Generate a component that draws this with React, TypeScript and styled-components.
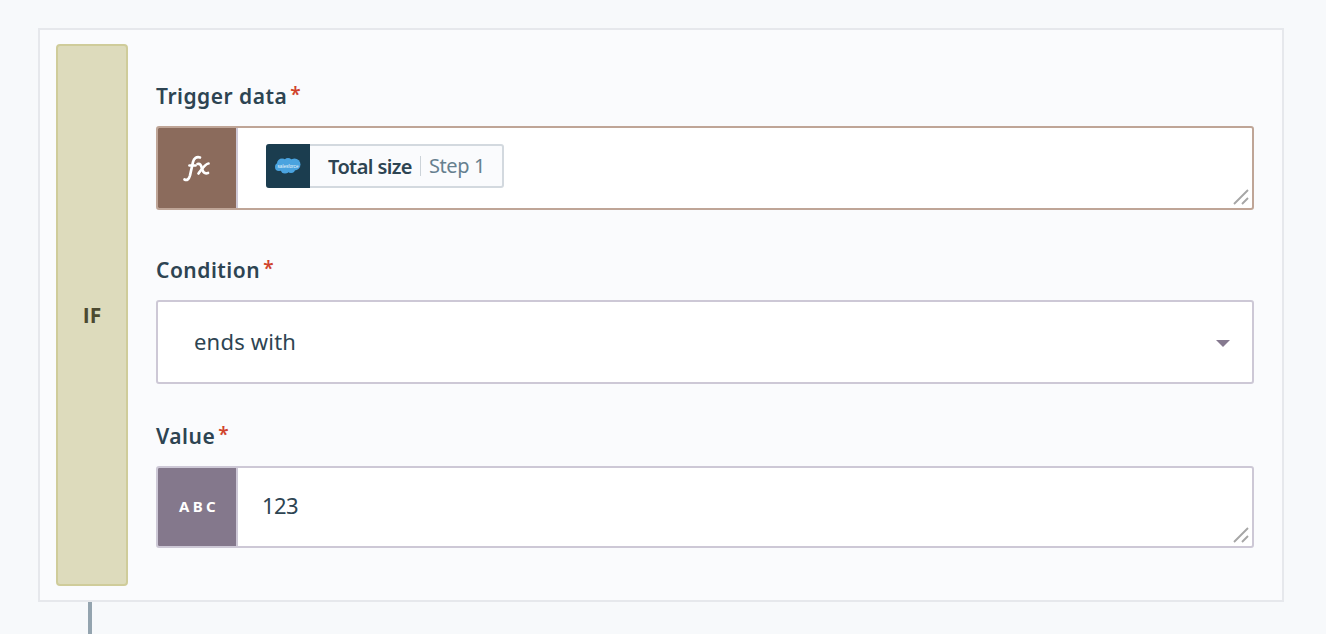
import React from "react";
import styled, { createGlobalStyle } from "styled-components";

const Global = createGlobalStyle`
  html, body { margin: 0; padding: 0; background: #f7f9fb; }
  body { font-family: "Noto Sans", "Open Sans", sans-serif; color: #2d4452; overflow: hidden; }
`;

const Page = styled.div`
  width: 1326px;
  height: 634px;
  box-sizing: border-box;
  padding: 28px 42px 0 38px;
  background: #f7f9fb;
  overflow: hidden;
`;

const Panel = styled.section`
  box-sizing: border-box;
  height: 574px;
  border: 2px solid #e6e8ec;
  background: #fafbfd;
  padding: 14px 28px 14px 16px;
  display: flex;
  gap: 28px;
`;

const Connector = styled.div`
  width: 4px;
  height: 32px;
  margin-left: 50px;
  background: #94a4af;
`;

const Branch = styled.div`
  box-sizing: border-box;
  width: 72px;
  flex: none;
  border: 2px solid #cfcc9a;
  border-radius: 4px;
  background: #dddbbc;
  display: flex;
  align-items: center;
  justify-content: center;
  font-family: "Open Sans", sans-serif;
  font-size: 21px;
  font-weight: 700;
  color: #4c4a30;
`;

const Fields = styled.div`
  flex: 1;
  min-width: 0;
  display: flex;
  flex-direction: column;
`;

const Label = styled.label<{ $top: number }>`
  display: flex;
  align-items: flex-start;
  height: 24px;
  margin-top: ${(p) => p.$top}px;
  margin-bottom: 18px;
  font-size: 21px;
  line-height: 24px;
  font-weight: 600;
  letter-spacing: 0.5px;
  color: #2d4452;
`;

const Star = styled.span`
  margin-left: 3px;
  color: #d0432c;
  font-size: 19px;
  line-height: 20px;
`;

const Control = styled.div<{ $h: number; $border: string }>`
  position: relative;
  box-sizing: border-box;
  height: ${(p) => p.$h}px;
  border: 2px solid ${(p) => p.$border};
  border-radius: 3px;
  background: #fff;
  display: flex;
  overflow: hidden;
`;

const TypeBox = styled.div<{ $bg: string }>`
  width: 78px;
  flex: none;
  border-right: 2px solid #cdc8d6;
  background: ${(p) => p.$bg};
  display: flex;
  align-items: center;
  justify-content: center;
  color: #fff;
`;

const Abc = styled.span`
  font-size: 15px;
  font-weight: 700;
  letter-spacing: 3.4px;
  margin-left: 4px;
  margin-bottom: 3px;
`;

const Content = styled.div<{ $pad: number; $ls: number; $lift: number }>`
  flex: 1;
  display: flex;
  align-items: center;
  padding-left: ${(p) => p.$pad}px;
  padding-bottom: ${(p) => p.$lift}px;
  font-size: 22px;
  letter-spacing: ${(p) => p.$ls}px;
  color: #2d4452;
`;

const Pill = styled.div`
  box-sizing: border-box;
  height: 44px;
  display: flex;
  align-items: center;
  border: 2px solid #d3d9df;
  border-left: none;
  border-radius: 3px;
  background: #fafbfd;
  margin-top: -4px;
`;

const PillLogo = styled.div`
  width: 44px;
  height: 44px;
  flex: none;
  border-radius: 3px 0 0 3px;
  background: #1b3d4f;
  margin: -2px 0;
  display: flex;
  align-items: center;
  justify-content: center;
`;

const PillName = styled.span`
  margin-left: 18px;
  font-size: 20px;
  font-weight: 600;
  letter-spacing: -0.6px;
  color: #2d4452;
`;

const PillStep = styled.span`
  margin-left: 8px;
  padding-left: 8px;
  border-left: 1px solid #ccd3d9;
  height: 20px;
  line-height: 20px;
  font-size: 20px;
  letter-spacing: -0.4px;
  color: #66808f;
  margin-right: 17px;
`;

const Caret = styled.div`
  position: absolute;
  right: 22px;
  top: 38px;
  width: 0;
  height: 0;
  border-left: 7px solid transparent;
  border-right: 7px solid transparent;
  border-top: 7px solid #85798f;
`;

const Grip = styled.svg`
  position: absolute;
  right: 3px;
  bottom: 3px;
`;

const LogoWord = styled.text`
  font-family: "Liberation Sans", sans-serif;
  font-size: 4.6px;
  fill: #e8f4fb;
`;

const ResizeGrip = () => (
  <Grip width="16" height="16" viewBox="0 0 16 16">
    <path d="M1 15 L15 1 M9 15 L15 9" stroke="#a6a6a6" strokeWidth="1.9" fill="none" />
  </Grip>
);

const FxIcon = () => (
  <svg width="30" height="28" viewBox="0 0 30 28">
    <g fill="none" stroke="#fff" strokeWidth="2.7" strokeLinecap="round">
      <path d="M2.500 25.500c2.500 1.200 4.500-.3 5.500-4L11 8c1-4 3.500-5.500 7-4.500" />
      <path d="M7.500 11.500h6" />
      <path d="M15.500 10c2.500-.6 3.600.7 4.500 4.500.9 3.800 2.300 5.500 6 4.500" />
      <path d="M26.500 9.500c-3 .2-6 4.500-10 10" />
    </g>
  </svg>
);

const CloudLogo = () => (
  <svg width="28" height="20" viewBox="0 0 28 20">
    <g fill="#4aa3df">
      <circle cx="8" cy="7.500" r="5" />
      <circle cx="14" cy="6.500" r="4.500" />
      <circle cx="20.500" cy="8.500" r="6" />
      <circle cx="5" cy="11" r="4" />
      <circle cx="11" cy="13" r="4.500" />
      <circle cx="17" cy="13" r="4" />
    </g>
    <LogoWord x="14" y="11.500" textAnchor="middle">salesforce</LogoWord>
  </svg>
);

export default function App() {
  return (
    <Page>
      <Global />
      <Panel>
        <Branch>IF</Branch>
        <Fields>
          <Label $top={40}>
            Trigger data<Star>*</Star>
          </Label>
          <Control $h={84} $border="#bfa597">
            <TypeBox $bg="#8b6b5c">
              <FxIcon />
            </TypeBox>
            <Content $pad={28} $ls={0} $lift={0}>
              <Pill>
                <PillLogo>
                  <CloudLogo />
                </PillLogo>
                <PillName>Total size</PillName>
                <PillStep>Step 1</PillStep>
              </Pill>
            </Content>
            <ResizeGrip />
          </Control>
          <Label $top={48}>
            Condition<Star>*</Star>
          </Label>
          <Control $h={84} $border="#cdc8d6">
            <Content $pad={36} $ls={0.2} $lift={2}>ends with</Content>
            <Caret />
          </Control>
          <Label $top={40}>
            Value<Star>*</Star>
          </Label>
          <Control $h={82} $border="#cdc8d6">
            <TypeBox $bg="#84788c">
              <Abc>ABC</Abc>
            </TypeBox>
            <Content $pad={24} $ls={-0.6} $lift={4}>123</Content>
            <ResizeGrip />
          </Control>
        </Fields>
      </Panel>
      <Connector />
    </Page>
  );
}
